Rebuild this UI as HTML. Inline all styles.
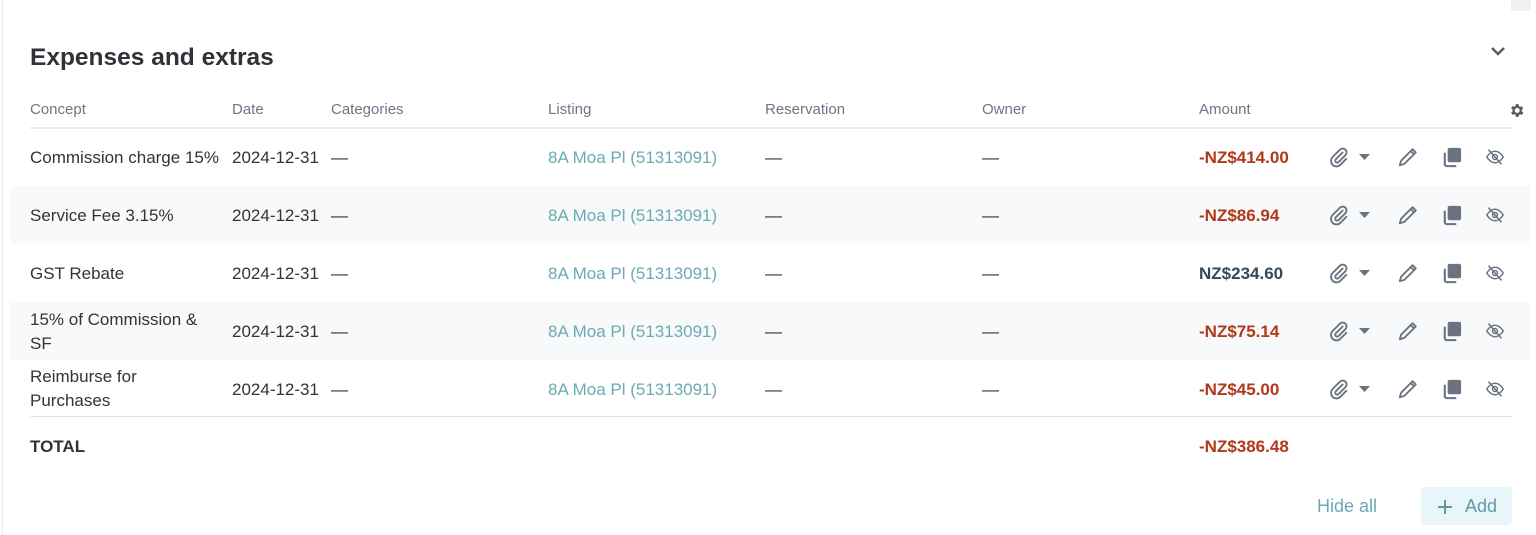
<!DOCTYPE html><html><head><style>
body{margin:0;width:1536px;height:535px;background:#fff;font-family:"Liberation Sans",sans-serif;position:relative;overflow:hidden;color:#333}
.a{position:absolute;white-space:nowrap}
.h{font-size:15px;color:#6b7785;top:101px}
.r{position:absolute;left:11px;width:1519px;height:58px}
.c{font-size:17px;color:#333}
.l{color:#6aabb3}
.neg{color:#b0391c;font-weight:bold;font-size:17px}
.pos{color:#34495e;font-weight:bold;font-size:17px}
svg{position:absolute}
</style></head><body>
<div class="a" style="left:2px;top:0;width:1px;height:535px;background:#e5e7ea"></div>
<div class="a" style="left:1511px;top:0;width:20px;height:11px;background:#eef0f2"></div>
<div class="a" style="left:30px;top:44px;font-size:24.5px;font-weight:bold;color:#2f3338">Expenses and extras</div>
<svg style="left:1490px;top:45px" width="16" height="12" viewBox="0 0 16 12"><path d="M2 3l6 6 6-6" stroke="#555d68" stroke-width="2.5" fill="none"/></svg>
<div class="a h" style="left:30px">Concept</div>
<div class="a h" style="left:232px">Date</div>
<div class="a h" style="left:331px">Categories</div>
<div class="a h" style="left:548px">Listing</div>
<div class="a h" style="left:765px">Reservation</div>
<div class="a h" style="left:982px">Owner</div>
<div class="a h" style="left:1199px">Amount</div>
<svg style="left:1508px;top:102px" width="17" height="17" viewBox="0 0 24 24"><path fill="#555d68" d="M19.4 13a7.5 7.5 0 000-2l2.1-1.6-2-3.5-2.5 1a7 7 0 00-1.7-1L15 3h-4l-.4 2.7a7 7 0 00-1.7 1l-2.5-1-2 3.5L6.6 11a7.5 7.5 0 000 2l-2.2 1.6 2 3.5 2.5-1a7 7 0 001.7 1L11 21h4l.4-2.7a7 7 0 001.7-1l2.5 1 2-3.5zM13 15.5a3.5 3.5 0 110-7 3.5 3.5 0 010 7z"/></svg>
<div class="a" style="left:30px;top:127px;width:1482px;height:2px;background:#e9ebee"></div>
<div class="r" style="top:186px;background:#f8f9fb"></div>
<div class="r" style="top:302px;background:#f8f9fb"></div>
<div class="a" style="left:30px;top:416px;width:1482px;height:1px;background:#e2e4e7"></div>

<div id="rows"></div>
<div class="a c" style="left:30px;top:148px">Commission charge 15%</div>
<div class="a c" style="left:30px;top:206px">Service Fee 3.15%</div>
<div class="a c" style="left:30px;top:264px">GST Rebate</div>
<div class="a c" style="left:30px;top:308px;line-height:24px">15% of Commission &amp;<br>SF</div>
<div class="a c" style="left:30px;top:365px;line-height:24px">Reimburse for<br>Purchases</div>

<script>
var ys=[157,215,273,331,389],am=[["-NZ$414.00","neg"],["-NZ$86.94","neg"],["NZ$234.60","pos"],["-NZ$75.14","neg"],["-NZ$45.00","neg"]];
var h="";
ys.forEach(function(y,i){var t=y-9;
h+='<div class="a c" style="left:232px;top:'+t+'px">2024-12-31</div>';
h+='<div class="a c" style="left:331px;top:'+t+'px">—</div>';
h+='<div class="a c l" style="left:548px;top:'+t+'px">8A Moa Pl (51313091)</div>';
h+='<div class="a c" style="left:765px;top:'+t+'px">—</div>';
h+='<div class="a c" style="left:982px;top:'+t+'px">—</div>';
h+='<div class="a '+am[i][1]+'" style="left:1199px;top:'+t+'px">'+am[i][0]+'</div>';
h+='<svg style="left:1328px;top:'+(y-11)+'px" width="22" height="22" viewBox="0 0 24 24"><path d="M16 7l-7.5 7.5a2 2 0 003 3L19 10a4 4 0 00-6-6l-8 8a6 6 0 008.5 8.5L20 14" stroke="#6b7280" stroke-width="2" fill="none" stroke-linecap="round"/></svg>';
h+='<svg style="left:1359px;top:'+(y-3)+'px" width="11" height="6" viewBox="0 0 11 6"><path d="M0 0h11L5.5 6z" fill="#6b7280"/></svg>';
h+='<svg style="left:1397px;top:'+(y-11)+'px" width="22" height="22" viewBox="0 0 24 24"><path d="M3 21l1.5-5L17 3.5l3.5 3.5L8 19.5zM15 5.5l3.5 3.5" stroke="#6b7280" stroke-width="2" fill="none" stroke-linejoin="round"/></svg>';
h+='<svg style="left:1440px;top:'+(y-11)+'px" width="23" height="23" viewBox="0 0 24 24"><rect x="8" y="2" width="14" height="15" rx="2" fill="#6b7280"/><path d="M5 7v12a2 2 0 002 2h10" stroke="#6b7280" stroke-width="2.2" fill="none"/></svg>';
h+='<svg style="left:1485px;top:'+(y-9)+'px" width="20" height="18" viewBox="0 0 24 22"><path d="M2 11s4-7 10-7 10 7 10 7-4 7-10 7S2 11 2 11z" stroke="#6b7280" stroke-width="1.8" fill="none"/><circle cx="12" cy="11" r="3" stroke="#6b7280" stroke-width="1.8" fill="none"/><path d="M4 2l16 18" stroke="#6b7280" stroke-width="1.8"/></svg>';
});
document.getElementById("rows").innerHTML=h;
</script>
<div class="a" style="left:30px;top:437px;font-size:17px;font-weight:bold;color:#2f3338">TOTAL</div>
<div class="a neg" style="left:1199px;top:437px">-NZ$386.48</div>
<div class="a" style="left:1317px;top:496px;font-size:18px;color:#6aabb3">Hide all</div>
<div class="a" style="left:1421px;top:487px;width:91px;height:38px;background:#e8f6f9;border-radius:4px"></div>
<svg style="left:1436px;top:498px" width="18" height="18" viewBox="0 0 18 18"><path d="M9 2v14M2 9h14" stroke="#5f9aa4" stroke-width="2"/></svg>
<div class="a" style="left:1465px;top:496px;font-size:18px;color:#5f9aa4">Add</div>
</body></html>
